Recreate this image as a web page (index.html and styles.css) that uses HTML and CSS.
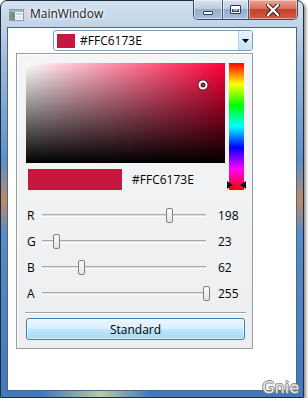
FILE: index.html
```html
<!DOCTYPE html>
<html lang="en">
<head>
  <meta charset="UTF-8" />
  <title>MainWindow</title>
  <link rel="stylesheet" href="styles.css">
</head>
<body>
  <div class="window">
    <div class="titlebar">
      <svg class="app-icon" width="15" height="12" viewBox="0 0 15 12">
        <rect x="0.5" y="0.5" width="14" height="11" fill="#f4f8fc" stroke="#8c9cab"/>
        <rect x="1" y="1" width="13" height="2" fill="#9fb7d0"/>
        <rect x="1" y="3" width="5" height="8" fill="#7a927a"/>
        <rect x="7" y="4" width="6" height="2" fill="#c5d3e0"/>
        <rect x="7" y="7" width="6" height="3" fill="#dfe7ef"/>
      </svg>
      <span class="title">MainWindow</span>
      <div class="caption-buttons">
        <div class="cap cap-min"><span class="glyph-min"></span></div>
        <div class="cap cap-max"><span class="glyph-max"></span></div>
        <div class="cap cap-close">
          <svg width="14" height="12" viewBox="0 0 14 12">
            <path d="M2 1 L12 11 M12 1 L2 11" stroke="#3a1e1a" stroke-width="4.4" stroke-linecap="round"/>
            <path d="M2 1 L12 11 M12 1 L2 11" stroke="#fff" stroke-width="2.4" stroke-linecap="round"/>
          </svg>
        </div>
      </div>
    </div>

    <div class="client">
      <div class="combo">
        <span class="combo-swatch"></span>
        <span class="combo-text">#FFC6173E</span>
        <span class="combo-button">
          <svg width="7" height="4" viewBox="0 0 7 4"><path d="M0 0 H7 L3.5 4 Z" fill="#000"/></svg>
        </span>
      </div>

      <div class="picker">
        <div class="picker-top">
          <div class="picker-left">
            <div class="sv-canvas">
              <span class="sv-marker" style="left: 177px; top: 22px;"></span>
            </div>
            <div class="current-row">
              <span class="current-swatch"></span>
              <span class="current-hex">#FFC6173E</span>
            </div>
          </div>
          <div class="hue-bar">
            <span class="hue-marker" style="top: 122px;"></span>
          </div>
        </div>

        <div class="sliders">
          <div class="slider-row">
            <span class="slider-label">R</span>
            <div class="slider"><span class="slider-track"></span><span class="slider-thumb" style="left: 128px;"></span></div>
            <span class="slider-value">198</span>
          </div>
          <div class="slider-row">
            <span class="slider-label">G</span>
            <div class="slider"><span class="slider-track"></span><span class="slider-thumb" style="left: 15px;"></span></div>
            <span class="slider-value">23</span>
          </div>
          <div class="slider-row">
            <span class="slider-label">B</span>
            <div class="slider"><span class="slider-track"></span><span class="slider-thumb" style="left: 40px;"></span></div>
            <span class="slider-value">62</span>
          </div>
          <div class="slider-row">
            <span class="slider-label">A</span>
            <div class="slider"><span class="slider-track"></span><span class="slider-thumb" style="left: 165px;"></span></div>
            <span class="slider-value">255</span>
          </div>
        </div>

        <div class="separator"></div>
        <button class="standard-btn">Standard</button>
      </div>
    </div>

    <span class="watermark">Gnie</span>
  </div>
</body>
</html>
```

FILE: styles.css
```css
/* Reset and base */
* {
  margin: 0;
  padding: 0;
  box-sizing: border-box;
}

body {
  font-family: 'Open Sans', 'Noto Sans', sans-serif;
  font-size: 12px;
  color: #000;
  background: #fff;
}

/* Aero window frame */
.window {
  position: relative;
  width: 304px;
  height: 398px;
  display: flex;
  flex-direction: column;
  border: 1px solid #1e2c3d;
  border-radius: 7px 7px 0 0;
  background:
    linear-gradient(90deg, rgba(255,255,255,0) 40px, rgba(214,222,150,0.8) 100px, rgba(255,255,255,0) 150px) bottom / 100% 7px no-repeat,
    linear-gradient(180deg, #d3e1f0 0, #bfd3e8 26px, #9dbbdc 60px, #5d8fc9 160px, #c08a66 200px, #5a8cc6 230px, #3f78bd 100%);
  box-shadow: 2px 2px 3px rgba(0, 0, 0, 0.45);
}

.titlebar {
  height: 26px;
  display: flex;
  align-items: flex-start;
  flex-shrink: 0;
}

.app-icon {
  margin: 8px 0 0 8px;
}

.title {
  margin: 4px 0 0 6px;
  font-size: 12px;
  color: #1a1a1a;
  text-shadow: 0 0 6px #fff, 0 0 3px #fff;
}

.caption-buttons {
  margin: -1px 5px 0 auto;
  display: flex;
  height: 20px;
  border: 1px solid #3b4c61;
  border-top: none;
  border-radius: 0 0 5px 5px;
  overflow: hidden;
}

.cap {
  height: 100%;
  display: flex;
  align-items: center;
  justify-content: center;
  box-shadow: inset 0 0 0 1px rgba(255, 255, 255, 0.45);
}

.cap-min, .cap-max {
  width: 29px;
  background: linear-gradient(180deg, #d6e2ef 0%, #bccde2 45%, #95aecd 50%, #a9c0dc 100%);
  border-right: 1px solid #4b5c72;
}

.cap-max {
  width: 26px;
}

.cap-close {
  width: 48px;
  background: linear-gradient(180deg, #e9a595 0%, #d9725d 45%, #c4422b 50%, #d35a3f 100%);
}

.glyph-min {
  width: 10px;
  height: 4px;
  margin-top: 6px;
  background: #fff;
  border: 1px solid #2c3a4c;
  border-radius: 1px;
}

.glyph-max {
  width: 11px;
  height: 9px;
  border: 1px solid #2c3a4c;
  border-radius: 1px;
  box-shadow: inset 0 0 0 1px #fff, inset 0 2px 0 1px #fff, inset 0 0 0 2px #2c3a4c;
}

/* Client area */
.client {
  flex: 1;
  margin: 0 6px 6px 6px;
  border: 1px solid #4a6482;
  background: #fff;
}

.combo {
  width: 200px;
  height: 21px;
  margin: 2px 0 0 45px;
  display: flex;
  align-items: center;
  border: 1px solid #7f9db9;
  border-radius: 3px;
  background: #fff;
  overflow: hidden;
}

.combo-swatch {
  width: 18px;
  height: 14px;
  margin-left: 3px;
  background: #c6173e;
}

.combo-text {
  margin-left: 5px;
  flex: 1;
}

.combo-button {
  width: 14px;
  height: 100%;
  display: flex;
  align-items: center;
  justify-content: center;
  background: linear-gradient(180deg, #e8f4fc, #c8e3f6);
  border-left: 1px solid #b4cde4;
}

/* Colour picker panel */
.picker {
  width: 237px;
  height: 296px;
  margin: 2px 0 0 8px;
  padding: 9px 7px 7px 9px;
  border: 1px solid #979ca2;
  background: linear-gradient(180deg, #f4f5f6, #eceef0);
  box-shadow: inset 1px 1px 0 #fff;
  display: flex;
  flex-direction: column;
}

.picker-top {
  display: flex;
  gap: 4px;
}

.picker-left {
  width: 199px;
}

.sv-canvas {
  position: relative;
  height: 100px;
  background:
    linear-gradient(0deg, #000, rgba(0, 0, 0, 0)),
    linear-gradient(90deg, #fff, #ff0039);
}

.sv-marker {
  position: absolute;
  width: 9px;
  height: 9px;
  transform: translate(-50%, -50%);
  border-radius: 50%;
  border: 2px solid #fff;
  box-shadow: 0 0 0 1px #333, inset 0 0 0 1px #333;
}

.current-row {
  display: flex;
  align-items: center;
  gap: 10px;
  margin-top: 6px;
  height: 21px;
}

.current-swatch {
  width: 94px;
  height: 21px;
  margin-left: 2px;
  background: #c6173e;
}

.hue-bar {
  position: relative;
  width: 15px;
  height: 127px;
  background: linear-gradient(180deg, #f00 0%, #ff0 16.67%, #0f0 33.33%, #0ff 50%, #00f 66.67%, #f0f 83.33%, #f00 100%);
}

.hue-marker {
  position: absolute;
  left: -2px;
  right: -2px;
  height: 8px;
  margin-top: -4px;
}

.hue-marker::before,
.hue-marker::after {
  content: "";
  position: absolute;
  top: 0;
  border-top: 4px solid transparent;
  border-bottom: 4px solid transparent;
}

.hue-marker::before {
  left: 0;
  border-left: 6px solid #111;
}

.hue-marker::after {
  right: 0;
  border-right: 6px solid #111;
}

/* RGBA sliders */
.sliders {
  margin-top: 12px;
}

.slider-row {
  height: 26px;
  display: flex;
  align-items: center;
}

.slider-label {
  width: 12px;
  padding-left: 1px;
}

.slider {
  position: relative;
  width: 172px;
  height: 15px;
}

.slider-track {
  position: absolute;
  left: 4px;
  right: 4px;
  top: 6px;
  height: 3px;
  border-top: 1px solid #a8acb0;
  border-bottom: 1px solid #fff;
  background: #dcdee0;
}

.slider-thumb {
  position: absolute;
  top: 0;
  width: 7px;
  height: 15px;
  border: 1px solid #7b7f84;
  border-radius: 2px;
  background: linear-gradient(180deg, #fcfcfc, #e2e4e6);
}

.slider-value {
  margin-left: 8px;
}

.separator {
  margin: 6px -1px 0;
  height: 1px;
  background: #a0a4a8;
  box-shadow: 0 1px 0 #fff;
}

.standard-btn {
  margin-top: 5px;
  height: 22px;
  font-family: inherit;
  font-size: 12px;
  color: #000;
  border: 1px solid #3c7fb1;
  border-radius: 3px;
  background: linear-gradient(180deg, #eaf6fd 0%, #d9f0fc 48%, #bee6fd 52%, #a7d9f5 100%);
  box-shadow: inset 0 0 0 1px rgba(255, 255, 255, 0.6);
}

.watermark {
  position: absolute;
  right: 4px;
  bottom: 0;
  font-family: 'DejaVu Sans', sans-serif;
  font-size: 16px;
  color: #e6e6e6;
  text-shadow: -1px 0 #8a8a8a, 1px 0 #8a8a8a, 0 -1px #8a8a8a, 0 1px #8a8a8a;
  line-height: 18px;
}
```
